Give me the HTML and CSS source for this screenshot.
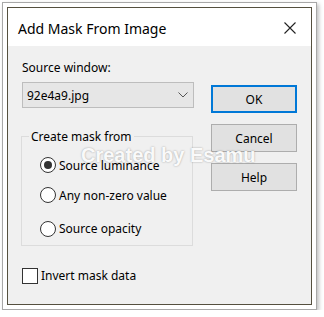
FILE: index.html
```html
<!DOCTYPE html>
<html>
  <head>
    <title>Add Mask From Image</title>
    <link rel="stylesheet" href="styles.css">
  </head>
  <body>
    <div class="frame">
      <div class="dialog">
        <div class="titlebar">
          <span class="title">Add Mask From Image</span>
          <svg class="close" width="12" height="12" viewBox="0 0 12 12">
            <path d="M0.5 0.5 L11.5 11.5 M11.5 0.5 L0.5 11.5" stroke="#222" stroke-width="1.1" fill="none"/>
          </svg>
        </div>
        <div class="content">
          <div class="left">
            <div class="label">Source window:</div>
            <div class="combo">
              <span>92e4a9.jpg</span>
              <svg width="10" height="6" viewBox="0 0 10 6">
                <path d="M0.5 0.5 L5 5 L9.5 0.5" stroke="#555" stroke-width="1" fill="none"/>
              </svg>
            </div>
            <fieldset class="group">
              <legend>Create mask from</legend>
              <label class="radio"><span class="dot checked"></span>Source luminance</label>
              <label class="radio"><span class="dot"></span>Any non-zero value</label>
              <label class="radio"><span class="dot"></span>Source opacity</label>
            </fieldset>
            <label class="check"><span class="box"></span>Invert mask data</label>
          </div>
          <div class="buttons">
            <button class="default">OK</button>
            <button>Cancel</button>
            <button>Help</button>
          </div>
        </div>
        <div class="watermark">Created by Esamu</div>
      </div>
    </div>
  </body>
</html>
```

FILE: styles.css
```css
body {
  margin: 0;
  background: #fff;
  font-family: "Noto Sans", sans-serif;
  font-size: 12px;
  color: #000;
}

.frame {
  margin: 2px 0 0 2px;
  width: 315px;
  height: 308px;
  border: 1px solid #a8a8a8;
  box-shadow: 2px 2px 4px rgba(0, 0, 0, 0.25);
  background: #fff;
  padding: 4px 0 0 4px;
  box-sizing: border-box;
}

.dialog {
  position: relative;
  width: 305px;
  height: 298px;
  border: 1px solid #55503f;
  background: #f0f0f0;
  box-sizing: border-box;
}

.titlebar {
  height: 38px;
  background: #fff;
  display: flex;
  align-items: center;
  justify-content: space-between;
  padding: 0 15px 0 10px;
}

.title {
  font-size: 14px;
  margin-top: 2px;
}

.close {
  margin-top: 2px;
}

.content {
  display: flex;
  padding: 14px 0 0 14px;
}

.left {
  width: 172px;
}

.label {
  line-height: 16px;
}

.combo {
  margin-top: 6px;
  height: 24px;
  border: 1px solid #bdbdbd;
  background: #e6e6e6;
  display: flex;
  align-items: center;
  justify-content: space-between;
  padding: 0 5px 0 4px;
}

.group {
  margin: 20px 0 0 -1px;
  padding: 5px 0 0 18px;
  height: 118px;
  width: 172px;
  border: 1px solid #dcdcdc;
  box-sizing: border-box;
}

.group legend {
  padding: 0 2px;
  margin-left: -11px;
}

.radio {
  display: flex;
  align-items: center;
  height: 30px;
}

.radio:nth-of-type(3) {
  height: 33px;
  padding-top: 2px;
}

.dot {
  width: 14px;
  height: 14px;
  border: 1px solid #333;
  border-radius: 50%;
  background: #fff;
  margin-right: 3px;
  position: relative;
}

.dot.checked::after {
  content: "";
  position: absolute;
  left: 3px;
  top: 3px;
  width: 8px;
  height: 8px;
  border-radius: 50%;
  background: #333;
}

.check {
  display: flex;
  align-items: center;
  margin-top: 21px;
}

.box {
  width: 14px;
  height: 14px;
  border: 1px solid #333;
  background: #fff;
  margin-right: 3px;
}

.buttons {
  display: flex;
  flex-direction: column;
  gap: 11px;
  margin: 25px 0 0 17px;
}

button {
  width: 86px;
  height: 28px;
  border: 1px solid #adadad;
  background: #e1e1e1;
  font-family: "Noto Sans", sans-serif;
  font-size: 12px;
  color: #000;
  padding: 0;
}

button.default {
  border: 2px solid #0078d7;
}

.watermark {
  position: absolute;
  left: 73px;
  top: 136px;
  font-size: 20px;
  font-weight: bold;
  color: rgba(255, 255, 255, 0.95);
  text-shadow: 0 0 2px rgba(0, 0, 0, 0.35);
  font-family: "Liberation Sans", sans-serif;
}
```
